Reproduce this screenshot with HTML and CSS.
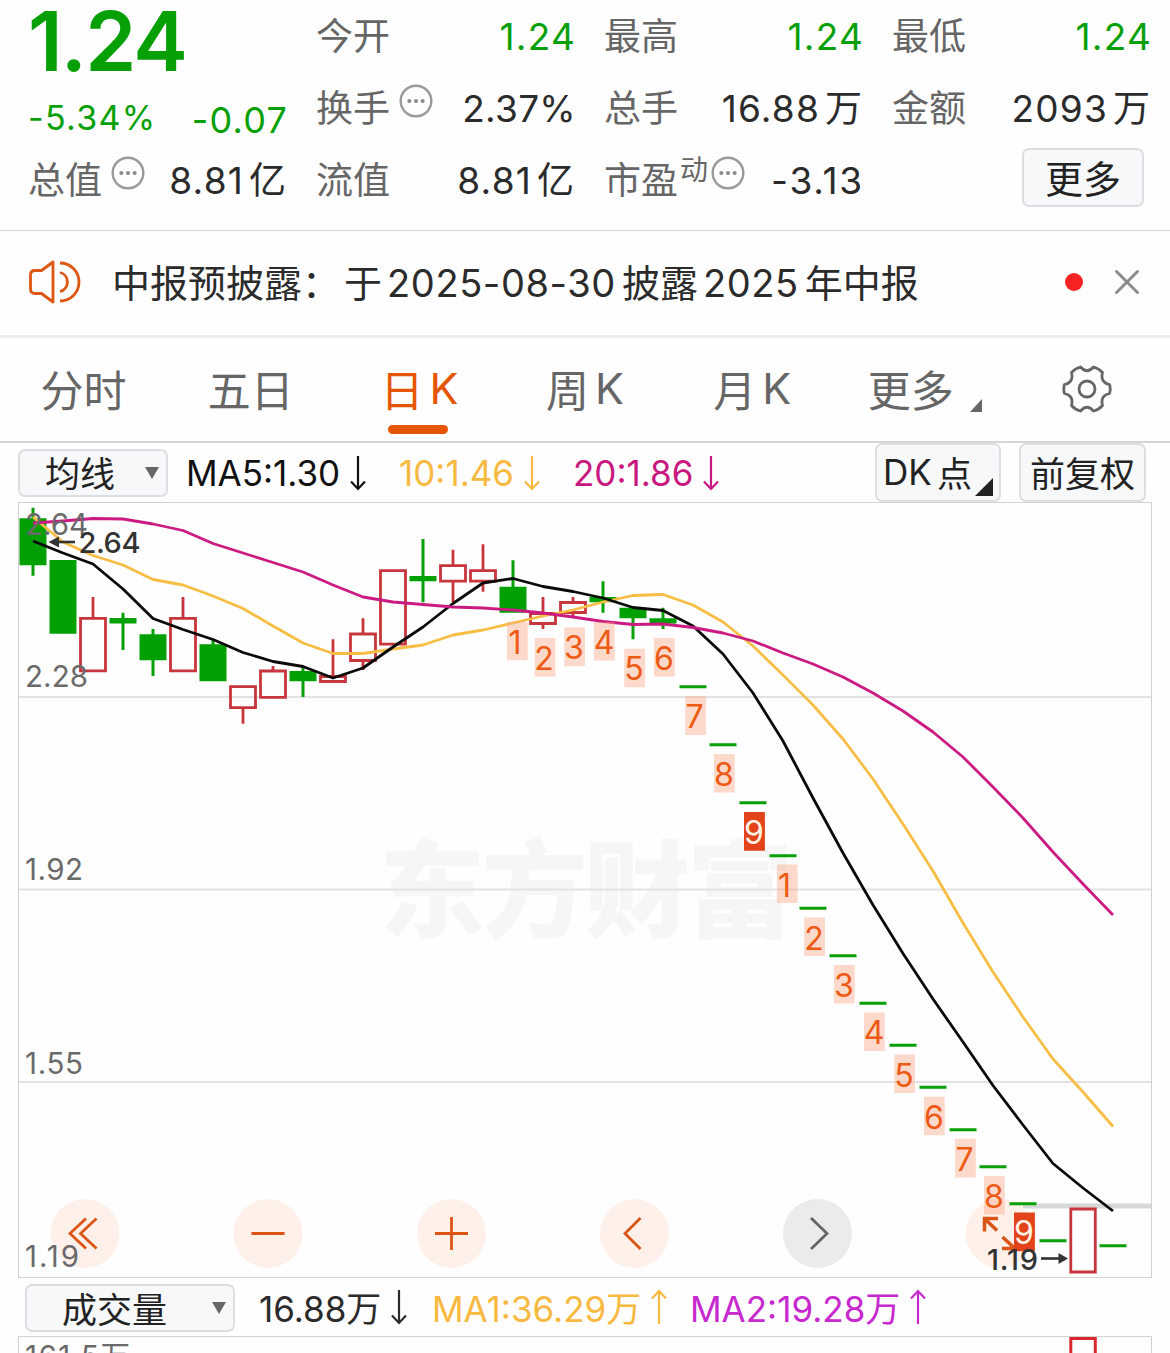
FILE: index.html
```
<!DOCTYPE html>
<html lang="zh-CN">
<head>
    <meta charset="UTF-8">
    <meta name="viewport" content="width=device-width, initial-scale=1.0">
    <title>日K</title>
    <link rel="stylesheet" href="styles.css">
</head>
<body>
    <svg class="defs" width="0" height="0">
        <symbol id="more-dots" viewBox="0 0 34 34">
            <circle cx="17" cy="17" r="15.3" fill="none" stroke="#999" stroke-width="2.4"/>
            <circle cx="10.3" cy="17" r="2" fill="#888"/>
            <circle cx="17" cy="17" r="2" fill="#888"/>
            <circle cx="23.7" cy="17" r="2" fill="#888"/>
        </symbol>
        <symbol id="arrow-down" viewBox="0 0 16 36">
            <path d="M8 1V34M1 26.5L8 34L15 26.5" fill="none" stroke="currentColor" stroke-width="2.2"/>
        </symbol>
        <symbol id="arrow-up" viewBox="0 0 16 36">
            <path d="M8 35V2M1 9.5L8 2L15 9.5" fill="none" stroke="currentColor" stroke-width="2.2"/>
        </symbol>
    </svg>

    <header class="quote">
        <div class="cell price">1.24</div>
        <div class="cell"><span class="label">今开</span><span class="value down">1.24</span></div>
        <div class="cell"><span class="label">最高</span><span class="value down">1.24</span></div>
        <div class="cell"><span class="label">最低</span><span class="value down">1.24</span></div>

        <div class="cell change"><span class="pct">-5.34%</span><span class="diff">-0.07</span></div>
        <div class="cell"><span class="label">换手<svg class="dots"><use href="#more-dots"/></svg></span><span class="value rate">2.37%</span></div>
        <div class="cell"><span class="label">总手</span><span class="value">16.88<i>万</i></span></div>
        <div class="cell"><span class="label">金额</span><span class="value">2093<i>万</i></span></div>

        <div class="cell"><span class="label">总值<svg class="dots"><use href="#more-dots"/></svg></span><span class="value">8.81<i>亿</i></span></div>
        <div class="cell"><span class="label">流值</span><span class="value">8.81<i>亿</i></span></div>
        <div class="cell"><span class="label">市盈<sup>动</sup><svg class="dots tight"><use href="#more-dots"/></svg></span><span class="value pe">-3.13</span></div>
        <div class="cell"><button class="btn more">更多</button></div>
    </header>

    <div class="notice">
        <svg class="speaker" viewBox="0 0 52 44" fill="none" stroke="#dd5713" stroke-width="2.8" stroke-linejoin="round">
            <path d="M24 2V42L12.500 33.500H6Q1.500 33.500 1.500 29V15Q1.500 10.500 6 10.500H12.500Z"/>
            <path d="M31 3A19 19 0 0 1 31 41M31 12.500A9.800 9.800 0 0 1 31 31.500"/>
        </svg>
        <p>中报预披露：<span class="gap">于</span><span class="num">2025-08-30</span>披露<span class="num">2025</span>年中报</p>
        <span class="dot"></span>
        <svg class="close" viewBox="0 0 26 26"><path d="M2.500 2.500L23.500 23.500M23.500 2.500L2.500 23.500" stroke="#8c8c8c" stroke-width="3" stroke-linecap="round"/></svg>
    </div>

    <nav class="tabs">
        <span>分时</span>
        <span>五日</span>
        <span class="active">日<b>K</b></span>
        <span>周<b>K</b></span>
        <span>月<b>K</b></span>
        <span class="with-corner">更多<svg class="corner" viewBox="0 0 12 13"><path d="M12 0V13H0Z" fill="#666"/></svg></span>
        <span>
            <svg class="gear" viewBox="0 0 50 50" fill="none" stroke="#666" stroke-width="2.8" stroke-linejoin="round">
                <path d="M18.500 3Q25 10.500 31.500 3Q37 4.500 40.500 8.500Q38 18.500 47.500 20.500Q49 25 47.500 29.500Q38 31.500 40.500 41.500Q37 45.500 31.500 47Q25 39.500 18.500 47Q13 45.500 9.500 41.500Q12 31.500 2.500 29.500Q1 25 2.500 20.500Q12 18.500 9.500 8.500Q13 4.500 18.500 3Z"/>
                <circle cx="25" cy="25" r="8"/>
            </svg>
        </span>
    </nav>

    <div class="toolbar">
        <button class="btn select"><span>均线</span><svg viewBox="0 0 14 12"><path d="M0 0H14L7 12Z" fill="#666"/></svg></button>
        <span class="ma ma5">MA5:1.30<svg><use href="#arrow-down"/></svg></span>
        <span class="ma ma10">10:1.46<svg><use href="#arrow-down"/></svg></span>
        <span class="ma ma20">20:1.86<svg><use href="#arrow-down"/></svg></span>
        <button class="btn tall dk">DK<i>点</i><svg viewBox="0 0 18 18"><path d="M18 0V18H0Z" fill="#222"/></svg></button>
        <button class="btn tall fq">前复权</button>
    </div>

    <svg class="chart" viewBox="18 502 1134 776">
        <text class="watermark" x="379" y="929" textLength="414">东方财富</text>
        <path class="grid" d="M18 697H1152M18 889.500H1152M18 1082H1152"/>
        <path d="M1023 1206H1152" stroke="#d6d8d8" stroke-width="5"/>

        <!-- zoom / pan buttons -->
        <g class="controls">
            <circle cx="85" cy="1233.500" r="34.500"/>
            <circle cx="268" cy="1233.500" r="34.500"/>
            <circle cx="451.500" cy="1233.500" r="34.500"/>
            <circle cx="634.500" cy="1233.500" r="34.500"/>
            <circle class="off" cx="817.500" cy="1233.500" r="34.500"/>
            <circle cx="1000" cy="1233.500" r="34.500"/>
            <path d="M86 1218.500L70 1233.500L86 1248.500M96.500 1218.500L80.500 1233.500L96.500 1248.500"/>
            <path d="M251.500 1233.500H284.500M435 1233.500H468M451.500 1217V1250"/>
            <path d="M640.500 1218L625 1233.500L640.500 1249"/>
            <path class="off" d="M811 1218L827 1233.500L811 1249"/>
            <path class="expand" d="M984.500 1231.500V1218.500H998M984.500 1218.500L997 1230.500M1002.500 1237L1016 1249.500M1002 1248.500H1016"/>
        </g>

        <!-- falling candles -->
        <path class="wick-down" d="M33 507.700V575.700M123 612.700V650M153 629V676M213 639V650M303 666V697M423 539V602.300M513 560.300V590M603 581.300V612.700M633 610V639.300M663 607.700V629"/>
        <path class="body-down" d="M19.500 518.300h27v47h-27zM49.500 560h27v73.700h-27zM109.500 618h27v5.500h-27zM139.500 634.300h27v26h-27zM199.500 644.300h27v37h-27zM289.500 671h27v10.300h-27zM409.500 576h27v5.300h-27zM499.500 586.700h27v26h-27zM589.500 597h27v5.300h-27zM619.500 607.700h27v10.600h-27zM649.500 618.300h27v5.300h-27z"/>
        <path class="limit-down" d="M679.500 686.700h27M709.500 744.700h27M739.500 802.700h27M769.500 855.700h27M799.500 908.300h27M829.500 955.700h27M859.500 1003.300h27M889.500 1045.300h27M919.500 1087.300h27M949.500 1129.700h27M979.500 1166.700h27M1009.500 1203.700h27M1039.500 1240.700h27M1099.500 1245.700h27"/>

        <!-- rising candles -->
        <path class="up" d="M93 597V617M183 597V617M243 709V723.700M273 666V670M333 639.300V676M363 618.300V633M363 662V670M453 549.700V565M453 582V602M483 544.300V570M483 582V591.700M543 597V613M543 624V629M573 597V602M573 613V618"/>
        <path class="up" d="M80.500 618.300h25v52.500h-25zM170.500 618.300h25v52.500h-25zM230.500 686.700h25v21h-25zM260.500 671h25v26.300h-25zM320.500 676.500h25v5h-25zM350.500 634h25v26.500h-25zM380.500 570.700h25v73.500h-25zM440.500 565.700h25v15.500h-25zM470.500 570.700h25v10.500h-25zM530.500 613.500h25v10h-25zM560.500 602.500h25v10h-25zM1070.800 1209h24.500v63h-24.500z"/>

        <!-- moving averages -->
        <polyline class="line ma10" points="33,517 63,542 93,555.5 123,565 153,579.5 183,585 213,596 243,608.5 273,626 303,643 333,653.500 363,653.500 393,649 423,645 453,635 483,630 513,623 543,616 573,610 603,602 633,595.500 663,594.500 693,605 723,622 753,646 783,675 813,705 843,739 873,779 903,824 933,871 963,923 993,972 1023,1017 1053,1059 1083,1092 1113,1126.500"/>
        <polyline class="line ma5" points="33,541 63,553 93,564 123,589 153,618.500 183,629.500 213,639.500 243,652.500 273,661.500 303,666.500 333,678 363,668 393,647 423,627 453,603.500 483,583 513,578.500 543,586.500 573,591.500 603,598 633,607.500 663,610.500 693,626 723,654 753,693 783,741 813,798 843,853 873,905 903,953.500 933,999 963,1042 993,1085.500 1023,1125 1053,1163.500 1083,1188 1113,1211"/>
        <polyline class="line ma20" points="33,523 63,521 93,518.500 123,519 153,524 183,530.500 213,543.500 243,553 273,562.500 303,572 333,585 363,597 393,602 423,604.500 453,607 483,608 513,610 543,613 573,617 603,621.500 633,624.500 663,624 693,627.500 723,633 753,641 783,653 813,664 843,677 873,693 903,711 933,732 963,757 993,787 1023,818 1053,852 1083,884 1113,915"/>

        <!-- nine-turn counts -->
        <path class="count-bg" d="M507 621.700h20.700v38.600h-20.700zM534.700 638h20.700v38.600h-20.700zM564.300 627.600h20.700v38.600h-20.700zM594 622h20.700v38.600h-20.700zM624.300 648.700h20.700v38.600h-20.700zM654 638h20.700v38.600h-20.700zM685.200 696.300h20.700v38.600h-20.700zM714 754h20.700v38.600h-20.700zM776.900 864.500h20.700v38.600h-20.700zM804.300 917.400h20.700v38.600h-20.700zM834 965h20.700v38.600h-20.700zM864 1012.400h20.700v38.600h-20.700zM894.300 1054.500h20.700v38.600h-20.700zM924 1096.700h20.700v38.600h-20.700zM955.100 1138.800h20.700v38.600h-20.700zM984 1176h20.700v38.600h-20.700z"/>
        <path fill="#e2431a" d="M744 812h20.900v38.800h-20.900zM1014 1212.500h20.900v38.800h-20.900z"/>
        <g class="count">
            <text x="515" y="653.500">1</text>
            <text x="544" y="669.500">2</text>
            <text x="574" y="659">3</text>
            <text x="604" y="653.500">4</text>
            <text x="634" y="680">5</text>
            <text x="664" y="669.500">6</text>
            <text x="694.500" y="728">7</text>
            <text x="724" y="785.500">8</text>
            <text class="nine" x="754" y="843.500">9</text>
            <text x="784.500" y="896.500">1</text>
            <text x="814" y="949.500">2</text>
            <text x="844" y="996.500">3</text>
            <text x="874" y="1044">4</text>
            <text x="904" y="1086.500">5</text>
            <text x="934" y="1128.500">6</text>
            <text x="964.500" y="1170.500">7</text>
            <text x="994" y="1207.500">8</text>
            <text class="nine" x="1024" y="1244">9</text>
        </g>

        <g class="axis">
            <text x="25" y="535" textLength="63">2.64</text>
            <text x="25" y="687" textLength="63">2.28</text>
            <text x="25" y="880" textLength="58">1.92</text>
            <text x="25" y="1074" textLength="58">1.55</text>
            <text x="25" y="1266.500" textLength="54">1.19</text>
        </g>
        <g class="extreme">
            <text x="78.500" y="552.500" textLength="62">2.64</text>
            <path d="M58 542H75" stroke="#333" stroke-width="2.600"/>
            <path d="M48.500 542L59 536.500V547.500Z"/>
            <text x="987" y="1270" textLength="51">1.19</text>
            <path d="M1041 1258.500H1060" stroke="#333" stroke-width="2.600"/>
            <path d="M1068 1258.500L1058.500 1253V1264Z"/>
        </g>
        <rect class="frame" x="18.500" y="502.500" width="1133" height="775"/>
    </svg>

    <div class="toolbar volume-bar">
        <button class="btn select wide"><span>成交量</span><svg viewBox="0 0 14 12"><path d="M0 0H14L7 12Z" fill="#666"/></svg></button>
        <span class="ma vol">16.88万<svg><use href="#arrow-down"/></svg></span>
        <span class="ma vol1">MA1:36.29万<svg><use href="#arrow-up"/></svg></span>
        <span class="ma vol2">MA2:19.28万<svg><use href="#arrow-up"/></svg></span>
    </div>

    <svg class="volume" viewBox="18 1336 1134 17">
        <text class="vol-max" x="25" y="1367" textLength="105">161.5万</text>
        <path class="vol-up" d="M1070.800 1360V1338.500h24.500V1360"/>
        <path class="frame" d="M18.500 1353V1336.500H1151.500V1353"/>
    </svg>
</body>
</html>
```

FILE: styles.css
```
* {
    box-sizing: border-box;
}
body {
    margin: 0;
    height: 1353px;
    overflow: hidden;
    background: #fefefe;
    color: #2b2b2b;
    font-family: Inter, "Noto Sans CJK SC", sans-serif;
    font-weight: 385;
}
i, b {
    font-style: normal;
    font-weight: inherit;
}
.defs {
    position: absolute;
}

/* quote header */
.quote {
    display: grid;
    grid-template-columns: repeat(4, 259px);
    grid-auto-rows: 72px;
    column-gap: 29px;
    height: 231px;
    padding: 1px 0 0 28px;
    border-bottom: 1px solid #d4d4d4;
}
.cell {
    display: flex;
    align-items: center;
    justify-content: space-between;
    font-size: 37px;
    line-height: 72px;
    white-space: nowrap;
}
.label {
    display: flex;
    color: #666;
}
.label sup {
    font-size: 28px;
    line-height: 50px;
    margin-left: 2px;
}
.value {
    letter-spacing: 1.2px;
    margin-right: -1px;
}
.value i {
    margin-left: 5px;
    letter-spacing: 0;
    margin-right: 2px;
}
.rate {
    letter-spacing: 0.3px;
}
.pe {
    letter-spacing: 1.8px;
}
.down, .price, .change {
    color: #06a006;
}
.price {
    font-size: 82px;
    font-weight: 620;
    line-height: 60px;
    padding-top: 9px;
    letter-spacing: -1.8px;
}
.pct {
    font-size: 34px;
    padding-top: 18px;
    letter-spacing: 1.3px;
}
.diff {
    font-size: 36px;
    padding-top: 22px;
    letter-spacing: 1.2px;
    margin-right: -1px;
}
.dots {
    width: 34px;
    height: 34px;
    margin: 11px 0 0 9px;
}
.dots.tight {
    margin-left: 3px;
}
.btn {
    display: flex;
    align-items: center;
    justify-content: center;
    padding: 0 0 2px;
    color: #222;
    background: #f6f8fa;
    border: 2px solid #dcdfe2;
    border-radius: 7px;
    font-family: inherit;
    font-weight: inherit;
}
.more {
    width: 122px;
    height: 59px;
    margin: -7px 7px 0 auto;
    font-size: 38px;
}

/* notice */
.notice {
    display: flex;
    align-items: center;
    height: 107px;
    padding: 0 30px 2px 29px;
    border-bottom: 3px solid #ededed;
}
.speaker {
    width: 52px;
    height: 44px;
}
.notice p {
    flex: 1;
    margin: -4px 0 0 31px;
    font-size: 38px;
}
.gap {
    margin-left: 4px;
}
.num {
    margin: 0 6px 0 5px;
    letter-spacing: 0.6px;
}
.dot {
    width: 18px;
    height: 18px;
    margin-right: 31px;
    border-radius: 50%;
    background: #f72323;
}
.close {
    width: 26px;
    height: 26px;
}

/* period tabs */
.tabs {
    display: grid;
    grid-template-columns: repeat(7, 1fr);
    height: 105px;
    border-bottom: 2px solid #d3d6d5;
}
.tabs span {
    position: relative;
    display: flex;
    align-items: center;
    justify-content: center;
    padding-bottom: 3px;
    color: #666;
    font-size: 43px;
}
.tabs b {
    margin-left: 6px;
}
.tabs .active {
    color: #e65503;
    padding-left: 3px;
}
.active::after {
    content: "";
    position: absolute;
    left: 54px;
    bottom: 7px;
    width: 60px;
    height: 9px;
    border-radius: 5px;
    background: #e65503;
}
.tabs .with-corner {
    padding-left: 11px;
}
.corner {
    width: 12px;
    height: 13px;
    margin: 34px 0 0 16px;
}
.gear {
    width: 50px;
    height: 50px;
    margin: 2px 0 0 2px;
}

/* indicator rows */
.toolbar {
    display: flex;
    align-items: center;
    height: 59px;
    padding-left: 18px;
}
.select {
    width: 150px;
    height: 48px;
    font-size: 35px;
    justify-content: space-between;
    padding: 0 7px 0 25px;
}
.select span {
    margin-top: -2px;
}
.select svg {
    width: 14px;
    height: 12px;
}
.ma {
    display: flex;
    align-items: center;
    font-size: 35px;
}
.ma svg {
    width: 16px;
    height: 36px;
    margin-left: 10px;
}
.ma5 {
    width: 213px;
    margin-left: 18px;
    color: #111;
}
.ma10 {
    width: 174px;
    color: #f7b940;
}
.ma20 {
    color: #c9187f;
}
.tall {
    height: 59px;
    font-size: 35px;
}
.dk {
    width: 126px;
    margin-left: auto;
}
.dk i {
    margin-left: 5px;
}
.dk svg {
    width: 18px;
    height: 18px;
    margin: 31px 0 0 3px;
}
.fq {
    width: 127px;
    margin: 0 24px 0 18px;
}

/* k-line chart */
.chart, .volume {
    display: block;
    width: 1134px;
    height: 776px;
    margin-left: 18px;
}
.frame {
    fill: none;
    stroke: #d2d2d2;
}
.grid {
    stroke: #e2e2e2;
    stroke-width: 2;
}
.watermark {
    font-size: 106px;
    font-weight: 900;
    fill: #f6f6f6;
}
.controls circle {
    fill: #fff1ea;
}
.controls circle.off {
    fill: #ebebeb;
}
.controls path {
    fill: none;
    stroke: #dc5514;
    stroke-width: 2.8;
}
.controls path.off {
    stroke: #666;
}
.controls .expand {
    stroke-width: 3.5;
}
.wick-down, .limit-down {
    stroke: #07a007;
    stroke-width: 3;
}
.body-down {
    fill: #02a002;
}
.up {
    fill: none;
    stroke: #c7363c;
    stroke-width: 2.8;
}
.line {
    fill: none;
    stroke-width: 2.8;
    stroke-linejoin: round;
}
.line.ma5 {
    stroke: #0a0a0a;
}
.line.ma10 {
    stroke: #f7bd45;
}
.line.ma20 {
    stroke: #cb1b83;
}
.count-bg {
    fill: #f9a27c;
    fill-opacity: 0.4;
}
.count {
    font-size: 32px;
    fill: #ee5a14;
    text-anchor: middle;
}
.count .nine {
    fill: #fff3e4;
}
.axis, .vol-max {
    font-size: 29.5px;
    fill: #6a6a6a;
}
.extreme {
    font-size: 29px;
    font-weight: 500;
    fill: #333;
}

/* volume */
.volume-bar {
    height: 58px;
    padding-left: 25px;
}
.volume-bar .ma {
    margin-top: -1px;
}
.volume-bar .btn {
    margin-top: 2px;
}
.wide {
    width: 210px;
    padding-left: 35px;
}
.volume-bar .vol {
    width: 173px;
    margin-left: 24px;
}
.vol1 {
    width: 258px;
    color: #f7b940;
}
.vol2 {
    color: #c828cf;
}
.volume {
    height: 17px;
}
.vol-up {
    fill: none;
    stroke: #d8282e;
    stroke-width: 3;
}
```
